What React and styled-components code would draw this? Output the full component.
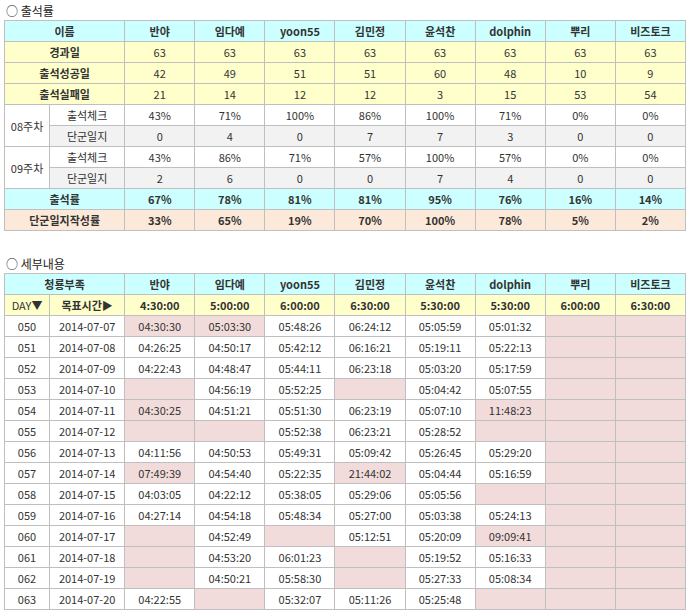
import React from 'react'
import styled, { createGlobalStyle } from 'styled-components'

const Global = createGlobalStyle`
  body { margin: 0; background: #fff; font-family: "Noto Sans CJK KR", "Noto Sans", sans-serif; font-size: 11px; color: #222; }
`

const Page = styled.div`
  padding: 2px 4px;
  width: 682px;
`

const Title = styled.div`
  font-size: 12px;
  height: 18px;
  line-height: 18px;
  margin-left: 2px;
  margin-top: ${p => p.$top || 0}px;
`

const Table = styled.table`
  border-collapse: collapse;
  width: 682px;
  table-layout: fixed;
`

const colors = { head: '#ccffff', yellow: '#ffffcc', gray: '#f2f2f2', peach: '#fde9d9', pink: '#f2dcdb', white: '#fff' }

const Cell = styled.td`
  border: 1px solid #bfbfbf;
  height: 20px;
  padding: 0;
  text-align: center;
  white-space: nowrap;
  font-weight: ${p => (p.$bold ? 700 : 400)};
  background: ${p => colors[p.$bg || 'white']};
  color: #333;
`

const names = ['반야', '임다예', 'yoon55', '김민정', '윤석찬', 'dolphin', '뿌리', '비즈토크']

const summary = [
  ['경과일', [63, 63, 63, 63, 63, 63, 63, 63]],
  ['출석성공일', [42, 49, 51, 51, 60, 48, 10, 9]],
  ['출석실패일', [21, 14, 12, 12, 3, 15, 53, 54]],
]

const weeks = [
  ['08주차', ['43%', '71%', '100%', '86%', '100%', '71%', '0%', '0%'], [0, 4, 0, 7, 7, 3, 0, 0]],
  ['09주차', ['43%', '86%', '71%', '57%', '100%', '57%', '0%', '0%'], [2, 6, 0, 0, 7, 4, 0, 0]],
]

const rate = ['67%', '78%', '81%', '81%', '95%', '76%', '16%', '14%']
const journal = ['33%', '65%', '19%', '70%', '100%', '78%', '5%', '2%']
const targets = ['4:30:00', '5:00:00', '6:00:00', '6:30:00', '5:30:00', '5:30:00', '6:00:00', '6:30:00']

// '!' prefix = 목표 미달 (pink)
const details = [
  ['050', '2014-07-07', ['!04:30:30', '!05:03:30', '05:48:26', '06:24:12', '05:05:59', '05:01:32', '', '']],
  ['051', '2014-07-08', ['04:26:25', '04:50:17', '05:42:12', '06:16:21', '05:19:11', '05:22:13', '', '']],
  ['052', '2014-07-09', ['04:22:43', '04:48:47', '05:44:11', '06:23:18', '05:03:20', '05:17:59', '', '']],
  ['053', '2014-07-10', ['', '04:56:19', '05:52:25', '', '05:04:42', '05:07:55', '', '']],
  ['054', '2014-07-11', ['!04:30:25', '04:51:21', '05:51:30', '06:23:19', '05:07:10', '!11:48:23', '', '']],
  ['055', '2014-07-12', ['', '', '05:52:38', '06:23:21', '05:28:52', '', '', '']],
  ['056', '2014-07-13', ['04:11:56', '04:50:53', '05:49:31', '05:09:42', '05:26:45', '05:29:20', '', '']],
  ['057', '2014-07-14', ['!07:49:39', '04:54:40', '05:22:35', '!21:44:02', '05:04:44', '05:16:59', '', '']],
  ['058', '2014-07-15', ['04:03:05', '04:22:12', '05:38:05', '05:29:06', '05:05:56', '', '', '']],
  ['059', '2014-07-16', ['04:27:14', '04:54:18', '05:48:34', '05:27:00', '05:03:38', '05:24:13', '', '']],
  ['060', '2014-07-17', ['', '04:52:49', '', '05:12:51', '05:20:09', '!09:09:41', '', '']],
  ['061', '2014-07-18', ['', '04:53:20', '06:01:23', '', '05:19:52', '05:16:33', '', '']],
  ['062', '2014-07-19', ['', '04:50:21', '05:58:30', '', '05:27:33', '05:08:34', '', '']],
  ['063', '2014-07-20', ['04:22:55', '', '05:32:07', '05:11:26', '05:25:48', '', '', '']],
]

const Cols = () => (
  <colgroup>
    <col style={{ width: 45 }} />
    <col style={{ width: 75 }} />
    {names.map(n => <col key={n} style={{ width: 70 }} />)}
  </colgroup>
)

export default function App() {
  return (
    <Page>
      <Global />
      <Title>○ 출석률</Title>
      <Table>
        <Cols />
        <tbody>
          <tr>
            <Cell colSpan={2} $bg="head" $bold>이름</Cell>
            {names.map(n => <Cell key={n} $bg="head" $bold>{n}</Cell>)}
          </tr>
          {summary.map(([label, vals]) => (
            <tr key={label}>
              <Cell colSpan={2} $bg="yellow" $bold>{label}</Cell>
              {vals.map((v, i) => <Cell key={i} $bg="yellow">{v}</Cell>)}
            </tr>
          ))}
          {weeks.map(([w, chk, jr]) => (
            <React.Fragment key={w}>
              <tr>
                <Cell rowSpan={2}>{w}</Cell>
                <Cell>출석체크</Cell>
                {chk.map((v, i) => <Cell key={i}>{v}</Cell>)}
              </tr>
              <tr>
                <Cell $bg="gray">단군일지</Cell>
                {jr.map((v, i) => <Cell key={i} $bg="gray">{v}</Cell>)}
              </tr>
            </React.Fragment>
          ))}
          <tr>
            <Cell colSpan={2} $bg="head" $bold>출석률</Cell>
            {rate.map((v, i) => <Cell key={i} $bg="head" $bold>{v}</Cell>)}
          </tr>
          <tr>
            <Cell colSpan={2} $bg="peach" $bold>단군일지작성률</Cell>
            {journal.map((v, i) => <Cell key={i} $bg="peach" $bold>{v}</Cell>)}
          </tr>
        </tbody>
      </Table>

      <Title $top={24}>○ 세부내용</Title>
      <Table>
        <Cols />
        <tbody>
          <tr>
            <Cell colSpan={2} $bg="head" $bold>청룡부족</Cell>
            {names.map(n => <Cell key={n} $bg="head" $bold>{n}</Cell>)}
          </tr>
          <tr>
            <Cell $bg="yellow">DAY▼</Cell>
            <Cell $bg="yellow" $bold>목표시간▶</Cell>
            {targets.map((t, i) => <Cell key={i} $bg="yellow" $bold>{t}</Cell>)}
          </tr>
          {details.map(([day, date, vals]) => (
            <tr key={day}>
              <Cell>{day}</Cell>
              <Cell>{date}</Cell>
              {vals.map((v, i) => {
                const pink = v === '' || v.startsWith('!')
                return <Cell key={i} $bg={pink ? 'pink' : 'white'}>{v.replace('!', '')}</Cell>
              })}
            </tr>
          ))}
        </tbody>
      </Table>
    </Page>
  )
}
